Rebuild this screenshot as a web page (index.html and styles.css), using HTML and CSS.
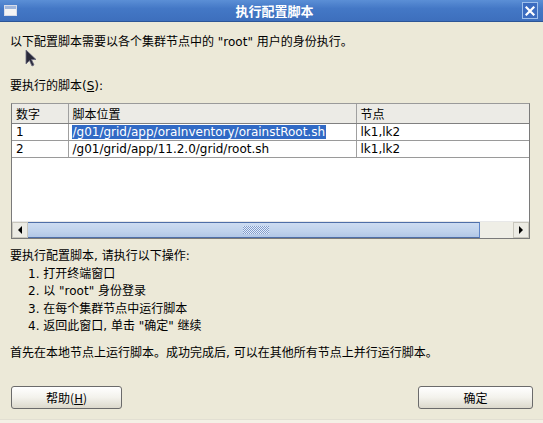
FILE: index.html
```html
<!DOCTYPE html>
<html lang="zh">
<head>
<meta charset="utf-8">
<title>执行配置脚本</title>
<link rel="stylesheet" href="styles.css">
</head>
<body>
<div class="window">
  <div class="titlebar">
    <span class="app-icon"><span class="app-icon-bar"></span></span>
    <span class="title">执行配置脚本</span>
    <span class="close">
      <svg width="10" height="10" viewBox="0 0 10 10"><path d="M1.5 1.5 L8.5 8.5 M8.5 1.5 L1.5 8.5" stroke="#fff" stroke-width="2.2" stroke-linecap="square"/></svg>
    </span>
  </div>
  <div class="content">
    <p class="intro">以下配置脚本需要以各个集群节点中的 "root" 用户的身份执行。</p>
    <p class="label">要执行的脚本(<u>S</u>):</p>
    <div class="tablebox">
      <table class="scripts">
        <thead>
          <tr><th class="c-num">数字</th><th class="c-path">脚本位置</th><th class="c-node">节点</th></tr>
        </thead>
        <tbody>
          <tr><td>1</td><td><span class="sel">/g01/grid/app/oraInventory/orainstRoot.sh</span></td><td>lk1,lk2</td></tr>
          <tr><td>2</td><td>/g01/grid/app/11.2.0/grid/root.sh</td><td>lk1,lk2</td></tr>
        </tbody>
      </table>
      <div class="spacer"></div>
      <div class="hscroll">
        <span class="sbtn"><svg width="4" height="8" viewBox="0 0 4 8"><path d="M4 0 L0 4 L4 8 Z" fill="#000"/></svg></span>
        <span class="thumb"><span class="grip"></span></span>
        <span class="track"></span>
        <span class="sbtn"><svg width="4" height="8" viewBox="0 0 4 8"><path d="M0 0 L4 4 L0 8 Z" fill="#000"/></svg></span>
      </div>
    </div>
    <div class="steps">
      <p>要执行配置脚本, 请执行以下操作:</p>
      <ol>
        <li>1. 打开终端窗口</li>
        <li>2. 以 "root" 身份登录</li>
        <li>3. 在每个集群节点中运行脚本</li>
        <li>4. 返回此窗口, 单击 "确定" 继续</li>
      </ol>
      <p class="note">首先在本地节点上运行脚本。成功完成后, 可以在其他所有节点上并行运行脚本。</p>
    </div>
    <div class="buttons">
      <button class="btn">帮助(<u>H</u>)</button>
      <button class="btn">确定</button>
    </div>
  </div>
  <div class="bottom-edge"></div>
  <svg class="cursor" width="12" height="18" viewBox="0 0 12 18"><path d="M1 1 L1 15 L4.5 11.5 L7 17 L9 16 L6.5 10.5 L11 10.5 Z" fill="#2a2a3a" stroke="#6a6a80" stroke-width="0.8"/></svg>
</div>
</body>
</html>
```
FILE: styles.css
```css
* { box-sizing: border-box; }
html, body { margin: 0; padding: 0; }
body {
  width: 543px;
  height: 423px;
  overflow: hidden;
  background: #ece9d8;
  font-family: "DejaVu Sans", "Noto Sans CJK SC", sans-serif;
  font-size: 12px;
  color: #000;
}
.window {
  position: relative;
  width: 543px;
  height: 423px;
  display: flex;
  flex-direction: column;
}
.titlebar {
  height: 22px;
  flex: none;
  display: flex;
  align-items: center;
  background: linear-gradient(#5b8fd6, #4478c6 40%, #3d6fbd);
  border-bottom: 1px solid #2c5596;
  padding: 0 5px 0 4px;
}
.app-icon {
  width: 13px;
  height: 11px;
  background: #f4f4f4;
  border: 1px solid #d8dce8;
  display: flex;
  flex-direction: column;
}
.app-icon-bar { height: 3px; background: #9fb6dc; }
.title {
  flex: 1;
  text-align: center;
  color: #fff;
  font-family: "Noto Sans CJK SC", sans-serif;
  font-weight: bold;
  font-size: 13px;
  padding-left: 10px;
}
.close {
  width: 16px;
  height: 17px;
  border: 1px solid #9ec0ec;
  background: #3b6cc0;
  display: flex;
  align-items: center;
  justify-content: center;
}
.content {
  flex: 1;
  padding: 0 10px;
  display: flex;
  flex-direction: column;
}
p { margin: 0; line-height: 17px; }
.intro { margin-top: 12px; }
.label { margin-top: 27px; }
u { text-decoration: underline; }
.tablebox {
  margin-top: 8px;
  margin-left: 1px;
  width: 519px;
  height: 136px;
  border: 1px solid #7a7a7a;
  border-top-color: #9a9a9a;
  background: #fff;
  display: flex;
  flex-direction: column;
}
.scripts {
  border-collapse: collapse;
  width: 100%;
  font-family: "DejaVu Sans", "Noto Sans CJK SC", sans-serif;
  font-size: 12px;
}
.scripts th {
  background: #ecebe6;
  font-weight: normal;
  text-align: left;
  height: 19px;
  padding: 0 0 0 4px;
  border-bottom: 1px solid #808080;
  border-right: 1px solid #a0a0a0;
  font-family: "Noto Sans CJK SC", sans-serif;
  font-size: 12px;
}
.scripts th:last-child { border-right: none; }
.scripts td {
  height: 17px;
  padding: 0 0 0 4px;
  border-bottom: 1px solid #9a9a9a;
  border-right: 1px solid #a0a0a0;
  white-space: nowrap;
}
.scripts td:last-child { border-right: none; }
.c-num { width: 56px; }
.c-path { width: 288px; }
.sel {
  background: #316ac5;
  color: #fff;
  padding: 0 1px;
  margin-left: -1px;
}
.spacer { flex: 1; }
.hscroll {
  height: 17px;
  display: flex;
  border-top: 1px solid #e8e8e8;
}
.sbtn {
  width: 16px;
  flex: none;
  background: #ecebe4;
  border: 1px solid #c8c6bc;
  display: flex;
  align-items: center;
  justify-content: center;
}
.thumb {
  width: 452px;
  flex: none;
  background: linear-gradient(#cddcf1, #bfd2ec 60%, #b1c7e6);
  border-top: 1px solid #4f6fa8;
  border-bottom: 1px solid #4f6fa8;
  border-right: 1px solid #5f86c8;
  display: flex;
  align-items: center;
  justify-content: center;
}
.grip {
  width: 26px;
  height: 8px;
  background-image: repeating-conic-gradient(#7f9bcb 0 25%, #e6eefa 0 50%);
  background-size: 2px 2px;
  margin-left: 4px;
}
.track { flex: 1; background: #efeee6; }
.steps { margin-top: 9px; }
.steps ol {
  list-style: none;
  margin: 1px 0 0;
  padding: 0 0 0 18px;
}
.steps li { line-height: 17.3px; }
.note { margin-top: 10px; }
.buttons {
  margin-top: 24px;
  display: flex;
  justify-content: space-between;
  padding: 0 0 0 1px;
}
.btn {
  width: 111px;
  height: 23px;
  border: 1px solid #6b6b6b;
  border-radius: 3px;
  background: linear-gradient(#ffffff, #f3f2ec 50%, #dcd9cc);
  font-family: "Noto Sans CJK SC", "DejaVu Sans", sans-serif;
  font-size: 12px;
  color: #000;
  padding: 0;
}
.buttons .btn:last-child { width: 115px; }
.bottom-edge {
  height: 4px;
  background: #f4f1e6;
  border-top: 1px solid #e2dfd2;
}
.cursor {
  position: absolute;
  left: 25px;
  top: 49px;
}
```
